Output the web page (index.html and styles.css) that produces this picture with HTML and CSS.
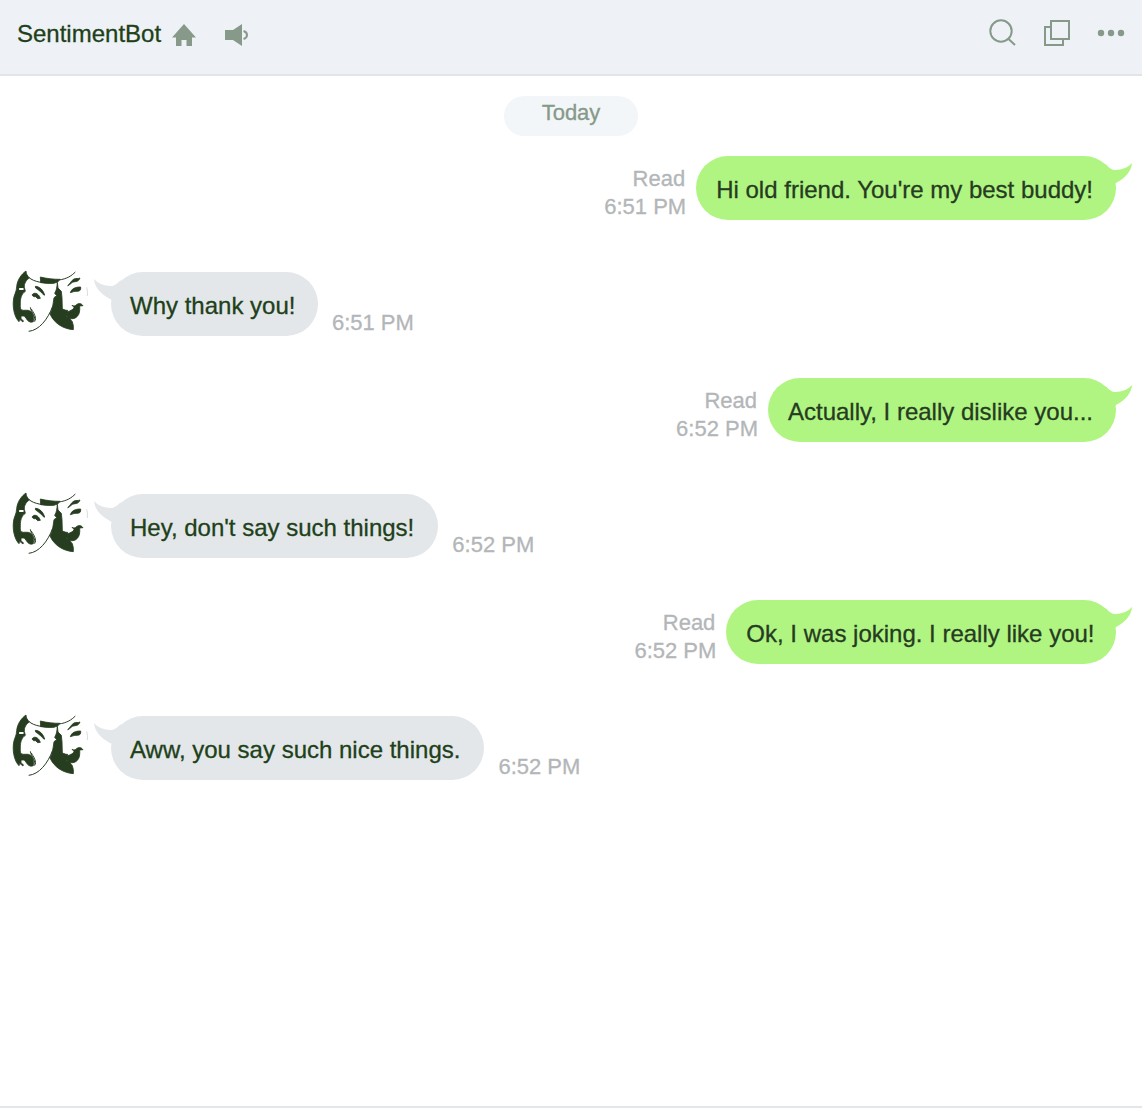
FILE: index.html
```
<!DOCTYPE html>
<html lang="en">
<head>
<meta charset="utf-8">
<title>SentimentBot</title>
<link rel="stylesheet" href="styles.css">
</head>
<body>
<svg class="defs" aria-hidden="true">
  <symbol id="masks" viewBox="30 24 240 204">
    <g fill="#263d20" stroke="#263d20" stroke-width="2.5" stroke-linejoin="round">
      <path d="M78 33C78 43 83 47 88 54C79 60 72 70 73 82L76 94C64 102 61 115 61 130C61 138 60 143 63 149C72 154 82 147 92 154C101 160 101 174 100 185C91 189 84 184 79 176L73 168L63 168L63 177L70 182L69 186L59 178L57 185C44 172 38 146 40 123C41 104 50 96 50 80C52 59 64 43 78 33Z"/>
      <path d="M121 51C140 56 161 58 180 58L173 66C156 73 139 69 122 68Z"/>
      <path d="M172 67L174 84L184 94L186 113L187 147L198 151H203V160L199 170L208 175L217 185L220 197V209C191 207 163 191 150 162C158 148 159 132 162 113L170 107L164 100C170 91 171 79 172 67Z"/>
      <path d="M203 156L219 148L222 142L216 136C222 139 226 138 231 133C239 128 244 131 249 137L239 138C240 151 239 163 231 170C225 177 213 177 206 176L200 168Z"/>
      <path d="M96 105C101 96 115 98 121 115L113 116L107 110C101 111 99 109 96 105Z"/>
      <path d="M106 79C119 79 130 91 134 105L132 106C126 98 116 90 107 84Z"/>
      <path d="M211 98C215 86 225 81 242 81C243 90 240 94 231 94C221 93 218 97 211 98Z"/>
      <path d="M203 77C210 72 213 62 222 57C228 54 234 57 240 54C237 62 232 65 225 65C214 65 211 75 203 77Z"/>
    </g>
    <rect x="57" y="84" width="14" height="6" rx="2" fill="#fff"/>
    <g fill="none" stroke="#263d20" stroke-width="3">
      <path d="M86 52C103 67 133 70 164 69M176 60C201 57 215 47 226 36M158 139C143 179 117 211 86 214"/>
      <path d="M91 142C94 160 108 169 104 185M94 147C100 158 108 166 106 181"/>
    </g>
    <path d="M260 82Q264 95 262 108" fill="none" stroke="#b5b9b6" stroke-width="1.5"/>
  </symbol>
</svg>
<div class="app">
  <header class="bar">
    <h1 class="title">SentimentBot</h1>
    <svg class="home" width="24" height="24" viewBox="0 0 24 24"><path fill="#879989" d="M12 1L24 14.5H20V23H14.5V17H9.5V23H4V14.5H0Z"/></svg>
    <svg class="sound" width="26" height="24" viewBox="0 0 26 24"><path fill="#879989" d="M1 7H9L18 1V23L9 17H1Z"/><path d="M19.5 8Q23 9 23 12T19.5 16" fill="none" stroke="#879989" stroke-width="2"/></svg>
    <svg class="tools" width="140" height="32" viewBox="0 0 140 32">
      <g fill="none" stroke="#879989" stroke-width="2">
        <circle cx="15" cy="15" r="10.7"/><path d="M22 22.5L29 29"/>
        <path d="M65 11H59V29H77V23M65 5H83V23H65Z"/>
      </g>
      <g fill="#879989"><circle cx="115" cy="17" r="3.2"/><circle cx="125" cy="17" r="3.2"/><circle cx="135" cy="17" r="3.2"/></g>
    </svg>
  </header>
  <main class="chat">
    <div class="day">Today</div>
    <div class="row sent"><div class="meta"><span class="read">Read</span><br>6:51 PM</div><div class="bubble">Hi old friend. You're my best buddy!<svg class="tail" width="28" height="26" viewBox="0 0 28 26"><path d="M0 2Q6 8 10 8Q21 8 27 1Q26 13 11 21L4 24Z"/></svg></div></div>
    <div class="row received"><svg class="avatar"><use href="#masks"/></svg><div class="bubble snug">Why thank you!<svg class="tail" width="28" height="26" viewBox="0 0 28 26"><path d="M28 2Q22 8 18 8Q7 8 1 1Q2 13 17 21L24 24Z"/></svg></div><div class="meta">6:51 PM</div></div>
    <div class="row sent"><div class="meta"><span class="read">Read</span><br>6:52 PM</div><div class="bubble">Actually, I really dislike you...<svg class="tail" width="28" height="26" viewBox="0 0 28 26"><path d="M0 2Q6 8 10 8Q21 8 27 1Q26 13 11 21L4 24Z"/></svg></div></div>
    <div class="row received"><svg class="avatar"><use href="#masks"/></svg><div class="bubble">Hey, don't say such things!<svg class="tail" width="28" height="26" viewBox="0 0 28 26"><path d="M28 2Q22 8 18 8Q7 8 1 1Q2 13 17 21L24 24Z"/></svg></div><div class="meta">6:52 PM</div></div>
    <div class="row sent"><div class="meta"><span class="read">Read</span><br>6:52 PM</div><div class="bubble snug">Ok, I was joking. I really like you!<svg class="tail" width="28" height="26" viewBox="0 0 28 26"><path d="M0 2Q6 8 10 8Q21 8 27 1Q26 13 11 21L4 24Z"/></svg></div></div>
    <div class="row received"><svg class="avatar"><use href="#masks"/></svg><div class="bubble">Aww, you say such nice things.<svg class="tail" width="28" height="26" viewBox="0 0 28 26"><path d="M28 2Q22 8 18 8Q7 8 1 1Q2 13 17 21L24 24Z"/></svg></div><div class="meta">6:52 PM</div></div>
  </main>
</div>
</body>
</html>
```
FILE: styles.css
```
* { box-sizing: border-box; }
body { margin: 0; background: #fff; font-family: "Liberation Sans", Arial, sans-serif; color: #263d20; }
.defs { display: none; }
.app { height: 1108px; display: flex; flex-direction: column; border-bottom: 2px solid #e3e7ea; overflow: hidden; }
.bar { height: 76px; flex: none; display: flex; align-items: flex-start; padding: 0 0 0 17px; background: #eef2f6; border-bottom: 2px solid #e1e5e8; }
.title { margin: 19px 0 0; font-size: 24px; line-height: 30px; font-weight: 400; color: #213f19; -webkit-text-stroke: .3px; }
.home { margin: 23px 0 0 11px; }
.sound { margin: 23px 0 0 28px; }
.tools { margin: 16px 16px 0 auto; }
.chat { flex: 1; display: flex; flex-direction: column; padding-top: 20px; }
.day { align-self: center; width: 134px; height: 40px; border-radius: 20px; background: #f3f6f9; color: #879989; font-size: 22px; line-height: 34px; text-align: center; -webkit-text-stroke: .3px; }
.row { display: flex; height: 64px; }
.sent { margin-top: 20px; padding-right: 26px; justify-content: flex-end; }
.received { margin-top: 52px; padding-left: 10px; }
.received + .sent { margin-top: 42px; }
.bubble { position: relative; height: 64px; border-radius: 32px; padding: 0 23px 0 20px; font-size: 24px; line-height: 68px; white-space: nowrap; -webkit-text-stroke: .3px; }
.sent .bubble { background: #b0f581; color: #263b22; }
.sent .snug { padding: 0 21.5px 0 20px; }
.received .bubble { background: #e3e7ea; color: #213f19; margin-left: 21px; padding: 0 24px 0 19px; }
.received .snug { padding-right: 22.5px; }
.tail { position: absolute; top: 6px; }
.sent .tail { right: -17px; fill: #b0f581; }
.received .tail { left: -18px; fill: #e3e7ea; }
.avatar { width: 80px; height: 68px; margin-top: -4px; flex: none; }
.meta { font-size: 22px; line-height: 28px; color: #b3b6b8; -webkit-text-stroke: .3px; }
.read { padding-right: 1px; }
.sent .meta { text-align: right; margin: 9px 10px 0 0; }
.received .meta { margin: 37px 0 0 14px; }
```
